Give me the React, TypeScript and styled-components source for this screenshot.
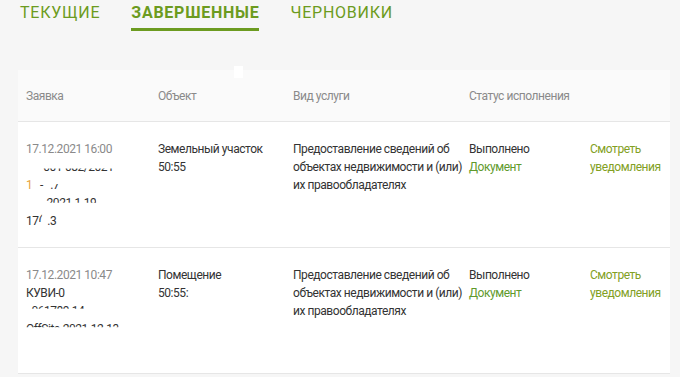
import { FC } from 'react';
import styled, { createGlobalStyle } from 'styled-components';

const GlobalStyle = createGlobalStyle`
  html, body {
    margin: 0;
    padding: 0;
    background: #f6f6f6;
  }
  body {
    font-family: Roboto, 'Liberation Sans', sans-serif;
  }
`;

const colors = {
  green: '#6c9b20',
  link: '#5f9a2c',
  olive: '#82a023',
  text: '#333333',
  muted: '#8a8a8a',
  border: '#e6e6e6',
};

const Page = styled.div`
  width: 680px;
  height: 377px;
  overflow: hidden;
  padding: 0 10px 0 18px;
  box-sizing: border-box;
`;

const Tabs = styled.nav`
  display: flex;
  gap: 31px;
  padding-left: 2px;
  height: 31px;
`;

const Tab = styled.div<{ $active?: boolean }>`
  font-size: 16px;
  line-height: 20px;
  padding-top: 3px;
  letter-spacing: 0.75px;
  text-transform: uppercase;
  color: ${colors.green};
  font-weight: ${({ $active }) => ($active ? 700 : 400)};
  border-bottom: 3px solid ${({ $active }) => ($active ? colors.green : 'transparent')};
  box-sizing: border-box;
`;

const Card = styled.div`
  position: relative;
  margin-top: 39px;
  background: #ffffff;
`;

// small white patch left over from blanking the source picture
const Patch = styled.span`
  position: absolute;
  left: 216px;
  top: -4px;
  width: 9px;
  height: 12px;
  background: #ffffff;
`;

const Grid = styled.div`
  display: grid;
  grid-template-columns: 132px 135px 176px 121px 1fr;
  padding-left: 8px;
  font-size: 12px;
  line-height: 18px;
  letter-spacing: -0.45px;
`;

const HeadRow = styled(Grid)`
  background: #fafafa;
  height: 51px;
  align-items: center;
  color: ${colors.muted};
  border-bottom: 1px solid ${colors.border};
`;

const Row = styled(Grid)`
  height: 126px;
  padding-top: 18px;
  box-sizing: border-box;
  color: ${colors.text};
  border-bottom: 1px solid ${colors.border};
`;

const Cell = styled.div`
  display: flex;
  flex-direction: column;
`;

const Line = styled.span<{ $tone?: 'muted' | 'link' | 'olive' | 'text' }>`
  white-space: nowrap;
  color: ${({ $tone }) =>
    $tone === 'muted'
      ? colors.muted
      : $tone === 'link'
        ? colors.link
        : $tone === 'olive'
          ? colors.olive
          : colors.text};
`;

// parts of the request number are blanked out in the source picture
const Cut = styled.span<{ $clip: string }>`
  display: inline-block;
  clip-path: inset(${({ $clip }) => $clip});
`;

const Accent = styled.span`
  color: #e9a23b;
`;

interface RequestRow {
  date: string;
  number: React.ReactNode;
  object: string;
  cadastre: string;
}

const rows: RequestRow[] = [
  {
    date: '17.12.2021 16:00',
    number: (
      <>
        <Line>
          <Cut $clip="58% 0 0 0">'&nbsp;&nbsp;&nbsp;&nbsp;&nbsp;-001-082/2021</Cut>
        </Line>
        <Line>
          <Accent>1</Accent>
          <Cut $clip="45% 0 0 0">&nbsp;&nbsp;&nbsp;-&nbsp;&nbsp;&nbsp;.7</Cut>
        </Line>
        <Line>
          <Cut $clip="0 0 52% 0">&nbsp;-&nbsp;&nbsp;&nbsp;&nbsp;&nbsp;&nbsp;2021-1-19</Cut>
        </Line>
        <Line>
          17<Cut $clip="0 0 45% 0">(</Cut>&nbsp;&nbsp;.3
        </Line>
      </>
    ),
    object: 'Земельный участок',
    cadastre: '50:55',
  },
  {
    date: '17.12.2021 10:47',
    number: (
      <>
        <Line>КУВИ-0</Line>
        <Line>
          <Cut $clip="0 0 62% 0">&nbsp;-061789 14</Cut>
        </Line>
        <Line>
          <Cut $clip="0 0 60% 0">OffSite-2021-12-13</Cut>
        </Line>
      </>
    ),
    object: 'Помещение',
    cadastre: '50:55:',
  },
];

const App: FC = () => (
  <>
    <GlobalStyle />
    <Page>
      <Tabs>
        <Tab>Текущие</Tab>
        <Tab $active>Завершенные</Tab>
        <Tab>Черновики</Tab>
      </Tabs>
      <Card>
        <Patch />
        <HeadRow>
          <span>Заявка</span>
          <span>Объект</span>
          <span>Вид услуги</span>
          <span>Статус исполнения</span>
          <span />
        </HeadRow>
        {rows.map((row) => (
          <Row key={row.date}>
            <Cell>
              <Line $tone="muted">{row.date}</Line>
              {row.number}
            </Cell>
            <Cell>
              <Line>{row.object}</Line>
              <Line>{row.cadastre}</Line>
            </Cell>
            <Cell>
              <Line>Предоставление сведений об</Line>
              <Line>объектах недвижимости и (или)</Line>
              <Line>их правообладателях</Line>
            </Cell>
            <Cell>
              <Line>Выполнено</Line>
              <Line $tone="link">Документ</Line>
            </Cell>
            <Cell>
              <Line $tone="olive">Смотреть</Line>
              <Line $tone="olive">уведомления</Line>
            </Cell>
          </Row>
        ))}
      </Card>
    </Page>
  </>
);

export default App;
